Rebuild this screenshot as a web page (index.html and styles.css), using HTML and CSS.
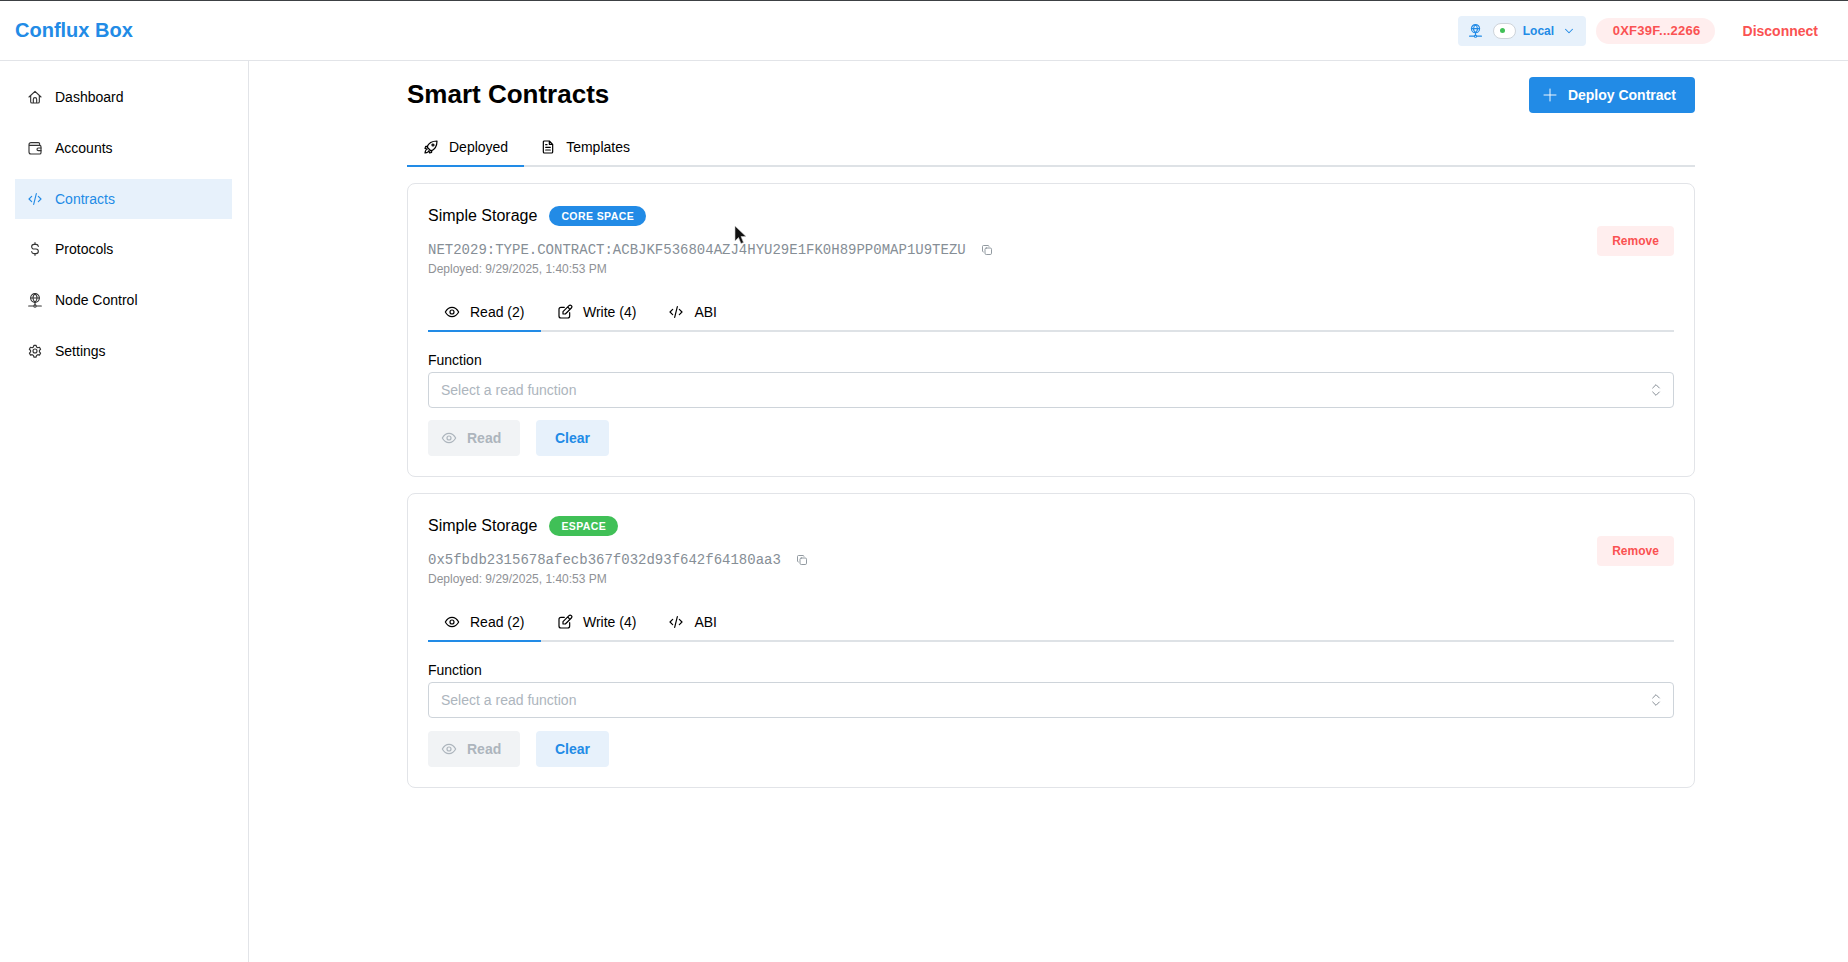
FILE: index.html
```html
<!DOCTYPE html>
<html lang="en">
  <head>
    <meta charset="UTF-8" />
    <title>Conflux Box</title>
    <link rel="stylesheet" href="styles.css">
  </head>
  <body>
    <svg class="icon-defs" width="0" height="0">
      <symbol id="i-home" viewBox="0 0 24 24"><path d="M3 12 12 3.500l9 8.500M5.500 10v9a2 2 0 0 0 2 2h9a2 2 0 0 0 2-2v-9M9.500 21v-5.500a2.500 2.500 0 0 1 5 0V21"/></symbol>
      <symbol id="i-wallet" viewBox="0 0 24 24"><path d="M19 8V6a2 2 0 0 0-2-2H6a3 3 0 0 0-3 3v11a3 3 0 0 0 3 3h13a2 2 0 0 0 2-2V10a2 2 0 0 0-2-2H3"/><path d="M21 12h-4a2 2 0 0 0 0 4h4"/></symbol>
      <symbol id="i-code" viewBox="0 0 24 24"><path d="M7 8l-4 4 4 4M17 8l4 4-4 4M14 4l-4 16"/></symbol>
      <symbol id="i-dollar" viewBox="0 0 24 24"><path d="M17 8a3.500 3.500 0 0 0-3.500-3h-3A3.500 3.500 0 0 0 10.500 12h3a3.500 3.500 0 0 1 0 7h-3A3.500 3.500 0 0 1 7 16M12 2.500V5M12 19v2.500"/></symbol>
      <symbol id="i-node" viewBox="0 0 24 24"><circle cx="12" cy="9" r="6.500"/><path d="M5.500 9h13M12 2.500c-4 4-4 9 0 13M12 2.500c4 4 4 9 0 13M12 15.500V20M2.500 21h7M14.500 21h7"/><circle cx="12" cy="21" r="1.800"/></symbol>
      <symbol id="i-gear" viewBox="0 0 24 24"><circle cx="12" cy="12" r="3"/><path d="M10.300 3.500h3.400l.6 2.500 1.900 1.100 2.500-.7 1.700 3-1.800 1.800v2.200l1.800 1.800-1.700 3-2.500-.7-1.900 1.100-.6 2.500h-3.400l-.6-2.500-1.900-1.100-2.500.7-1.700-3 1.800-1.800v-2.200L3.500 9.400l1.700-3 2.500.7 1.900-1.100z"/></symbol>
      <symbol id="i-chev" viewBox="0 0 24 24"><path d="M6 9l6 6 6-6"/></symbol>
      <symbol id="i-plus" viewBox="0 0 24 24"><path d="M12 3v18M3 12h18"/></symbol>
      <symbol id="i-rocket" viewBox="0 0 24 24"><path d="M9 15l-3-3c2-5 7-9 15-9 0 8-4 13-9 15z"/><circle cx="15" cy="9" r="1.500"/><path d="M7 11H4l-1 3 3 1M13 17v3l-3 1-1-3M6.500 15c-2 .5-3 2-3.500 6 4-.5 5.500-1.500 6-3.500"/></symbol>
      <symbol id="i-file" viewBox="0 0 24 24"><path d="M14 3H6.500a1.500 1.500 0 0 0-1.500 1.500v15A1.500 1.500 0 0 0 6.500 21h11a1.500 1.500 0 0 0 1.500-1.500V8zM14 3v5h5M8.500 12.500h7M8.500 16.500h7M8.500 8.500h2"/></symbol>
      <symbol id="i-copy" viewBox="0 0 24 24"><rect x="8" y="8" width="13" height="13" rx="2.500"/><path d="M4.500 16A2 2 0 0 1 3 14V5a2 2 0 0 1 2-2h9a2 2 0 0 1 2 1.500"/></symbol>
      <symbol id="i-eye" viewBox="0 0 24 24"><path d="M2 12c2.500-4.500 6-7 10-7s7.500 2.500 10 7c-2.500 4.500-6 7-10 7s-7.500-2.500-10-7z"/><circle cx="12" cy="12" r="3"/></symbol>
      <symbol id="i-edit" viewBox="0 0 24 24"><path d="M11 5H6a3 3 0 0 0-3 3v10a3 3 0 0 0 3 3h10a3 3 0 0 0 3-3v-5"/><path d="M9 15v-3.500L18 2.500a2.400 2.400 0 0 1 3.500 3.500L12.500 15zM16 4.500 19.500 8"/></symbol>
      <symbol id="i-updown" viewBox="0 0 24 24"><path d="M7 9l5-5 5 5M7 15l5 5 5-5"/></symbol>
    </svg>

    <header class="topbar">
      <div class="logo">Conflux Box</div>
      <div class="topbar-right">
        <div class="node-pill">
          <svg class="ico ico-node-sm"><use href="#i-node"/></svg>
          <span class="switch"><span class="switch-dot"></span></span>
          <span class="node-label">Local</span>
          <svg class="ico ico-chev"><use href="#i-chev"/></svg>
        </div>
        <div class="addr-pill">0XF39F...2266</div>
        <div class="disconnect">Disconnect</div>
      </div>
    </header>

    <div class="layout">
      <nav class="sidebar">
        <a class="nav-item"><svg class="ico"><use href="#i-home"/></svg>Dashboard</a>
        <a class="nav-item"><svg class="ico"><use href="#i-wallet"/></svg>Accounts</a>
        <a class="nav-item active"><svg class="ico"><use href="#i-code"/></svg>Contracts</a>
        <a class="nav-item"><svg class="ico"><use href="#i-dollar"/></svg>Protocols</a>
        <a class="nav-item"><svg class="ico"><use href="#i-node"/></svg>Node Control</a>
        <a class="nav-item"><svg class="ico"><use href="#i-gear"/></svg>Settings</a>
      </nav>

      <main class="main">
        <div class="page">
          <div class="page-head">
            <h1>Smart Contracts</h1>
            <button class="btn-primary"><svg class="ico"><use href="#i-plus"/></svg>Deploy Contract</button>
          </div>

          <div class="tabs tabs-page">
            <div class="tab active"><svg class="ico"><use href="#i-rocket"/></svg>Deployed</div>
            <div class="tab"><svg class="ico"><use href="#i-file"/></svg>Templates</div>
          </div>

          <section class="card">
            <div class="card-head">
              <div>
                <div class="card-title">
                  <span class="card-name">Simple Storage</span>
                  <span class="badge badge-core">CORE SPACE</span>
                </div>
                <div class="address">NET2029:TYPE.CONTRACT:ACBJKF536804AZJ4HYU29E1FK0H89PP0MAP1U9TEZU<svg class="ico"><use href="#i-copy"/></svg></div>
                <div class="deployed">Deployed: 9/29/2025, 1:40:53 PM</div>
              </div>
              <button class="btn-remove">Remove</button>
            </div>
            <div class="tabs">
              <div class="tab active"><svg class="ico"><use href="#i-eye"/></svg>Read (2)</div>
              <div class="tab"><svg class="ico"><use href="#i-edit"/></svg>Write (4)</div>
              <div class="tab"><svg class="ico"><use href="#i-code"/></svg>ABI</div>
            </div>
            <div class="field-label">Function</div>
            <div class="select">Select a read function<svg class="ico"><use href="#i-updown"/></svg></div>
            <div class="actions">
              <button class="btn-read"><svg class="ico"><use href="#i-eye"/></svg>Read</button>
              <button class="btn-clear">Clear</button>
            </div>
          </section>

          <section class="card">
            <div class="card-head">
              <div>
                <div class="card-title">
                  <span class="card-name">Simple Storage</span>
                  <span class="badge badge-espace">ESPACE</span>
                </div>
                <div class="address">0x5fbdb2315678afecb367f032d93f642f64180aa3<svg class="ico"><use href="#i-copy"/></svg></div>
                <div class="deployed">Deployed: 9/29/2025, 1:40:53 PM</div>
              </div>
              <button class="btn-remove">Remove</button>
            </div>
            <div class="tabs">
              <div class="tab active"><svg class="ico"><use href="#i-eye"/></svg>Read (2)</div>
              <div class="tab"><svg class="ico"><use href="#i-edit"/></svg>Write (4)</div>
              <div class="tab"><svg class="ico"><use href="#i-code"/></svg>ABI</div>
            </div>
            <div class="field-label">Function</div>
            <div class="select">Select a read function<svg class="ico"><use href="#i-updown"/></svg></div>
            <div class="actions">
              <button class="btn-read"><svg class="ico"><use href="#i-eye"/></svg>Read</button>
              <button class="btn-clear">Clear</button>
            </div>
          </section>
        </div>
      </main>
    </div>

    <svg class="cursor" width="13" height="20" viewBox="0 0 13 20"><path d="M1 1v15l3.500-3.500 2.500 6 2.500-1-2.500-6H12z" fill="#111" stroke="#ccc" stroke-width=".6"/></svg>
  </body>
</html>
```

FILE: styles.css
```css
* {
  box-sizing: border-box;
}
body {
  font-family: "Liberation Sans", Arial, sans-serif;
  margin: 0;
  height: 962px;
  overflow: hidden;
  color: #000;
  background-color: #fff;
  border-top: 1px solid #3c4043;
}
.icon-defs {
  position: absolute;
}
.ico {
  width: 16px;
  height: 16px;
  flex-shrink: 0;
  fill: none;
  stroke: currentColor;
  stroke-width: 1.8;
  stroke-linecap: round;
  stroke-linejoin: round;
}
button {
  font-family: inherit;
  border: none;
}

/* top bar */
.topbar {
  height: 60px;
  display: flex;
  align-items: center;
  justify-content: space-between;
  padding: 0 30px 0 15px;
  border-bottom: 1px solid #e2e4e8;
}
.logo {
  font-size: 20px;
  font-weight: bold;
  color: #228be6;
}
.topbar-right {
  display: flex;
  align-items: center;
}
.node-pill {
  display: flex;
  align-items: center;
  height: 30px;
  width: 128px;
  padding: 0 10px;
  background-color: #e7f1fb;
  border-radius: 4px;
  color: #228be6;
  font-size: 12px;
  font-weight: bold;
}
.ico-node-sm {
  width: 15px;
  height: 15px;
}
.switch {
  display: flex;
  align-items: center;
  width: 23px;
  height: 16px;
  margin-left: 10px;
  padding-left: 6px;
  border: 1px solid #ced4da;
  border-radius: 8px;
  background-color: #fff;
}
.switch-dot {
  width: 5px;
  height: 5px;
  border-radius: 50%;
  background-color: #40c057;
}
.node-label {
  margin-left: 7px;
}
.ico-chev {
  width: 14px;
  height: 14px;
  margin-left: auto;
}
.addr-pill {
  display: flex;
  align-items: center;
  height: 26px;
  margin-left: 10px;
  padding: 0 14px 0 17px;
  background-color: #ffeeee;
  border-radius: 13px;
  color: #fa5252;
  font-size: 13px;
  font-weight: bold;
  letter-spacing: 0.25px;
}
.disconnect {
  margin-left: 28px;
  color: #fa5252;
  font-size: 14px;
  font-weight: bold;
}

/* sidebar */
.layout {
  display: flex;
  height: 901px;
}
.sidebar {
  width: 249px;
  flex-shrink: 0;
  padding: 16px 16px 0 15px;
  border-right: 1px solid #e2e4e8;
}
.nav-item {
  display: flex;
  align-items: center;
  height: 40px;
  margin-bottom: 10.8px;
  padding-left: 12px;
  gap: 12px;
  font-size: 14px;
  color: #000;
}
.nav-item .ico {
  color: #333;
  stroke-width: 1.7;
}
.nav-item.active {
  background-color: #e7f1fb;
  color: #228be6;
}
.nav-item.active .ico {
  color: #228be6;
}

/* main area */
.main {
  flex: 1;
  padding: 16px 153px 0 158px;
}
.page-head {
  display: flex;
  align-items: center;
  justify-content: space-between;
  height: 36px;
}
h1 {
  margin: 0 0 2px;
  font-size: 26px;
  font-weight: bold;
}
.btn-primary {
  display: flex;
  align-items: center;
  gap: 10px;
  height: 36px;
  padding: 0 19px 0 13px;
  background-color: #228be6;
  border-radius: 4px;
  color: #fff;
  font-size: 14px;
  font-weight: bold;
}
.btn-primary .ico {
  stroke-width: 1.4;
}
.tabs {
  display: flex;
  border-bottom: 2px solid #dee2e6;
}
.tabs-page {
  margin-top: 14px;
  margin-bottom: 16px;
}
.tab {
  display: flex;
  align-items: center;
  gap: 10px;
  height: 40px;
  margin-bottom: -2px;
  padding: 1px 16px 0;
  border-bottom: 2px solid transparent;
  font-size: 14px;
}
.card .tab.active {
  padding-right: 16.5px;
}
.tab.active {
  border-bottom-color: #228be6;
}

/* contract card */
.card {
  height: 294.3px;
  margin-bottom: 16px;
  padding: 22px 20px 0;
  border: 1px solid #e2e4e8;
  border-radius: 8px;
}
.card-head {
  display: flex;
  align-items: center;
  justify-content: space-between;
  margin-bottom: 16px;
}
.card-title {
  display: flex;
  align-items: center;
  gap: 12px;
  height: 20px;
}
.card-name {
  font-size: 16px;
}
.badge {
  display: flex;
  align-items: center;
  height: 20px;
  padding: 0 12px;
  border-radius: 10px;
  color: #fff;
  font-size: 10.5px;
  font-weight: bold;
  letter-spacing: 0.4px;
}
.badge-core {
  background-color: #228be6;
}
.badge-espace {
  background-color: #40c057;
}
.address {
  display: flex;
  align-items: center;
  height: 18px;
  margin-top: 15px;
  font-family: "Liberation Mono", monospace;
  font-size: 14px;
  color: #868e96;
}
.address .ico {
  width: 12px;
  height: 12px;
  margin-left: 15px;
}
.deployed {
  height: 14px;
  margin-top: 3px;
  font-size: 12px;
  line-height: 14px;
  color: #909296;
}
.btn-remove {
  width: 77px;
  height: 30px;
  background-color: #ffeeee;
  border-radius: 4px;
  color: #fa5252;
  font-size: 12px;
  font-weight: bold;
}
.field-label {
  height: 16px;
  margin-top: 20px;
  font-size: 14px;
  line-height: 16px;
}
.select {
  display: flex;
  align-items: center;
  justify-content: space-between;
  height: 36px;
  margin-top: 4px;
  padding: 0 9px 0 12px;
  border: 1px solid #ced4da;
  border-radius: 4px;
  font-size: 14px;
  color: #adb5bd;
}
.select .ico {
  color: #868e96;
  stroke-width: 1.5;
}
.actions {
  display: flex;
  gap: 16px;
  margin-top: 12.3px;
}
.btn-read {
  display: flex;
  align-items: center;
  gap: 10px;
  width: 92px;
  height: 36px;
  padding-left: 13px;
  background-color: #f1f3f5;
  border-radius: 4px;
  color: #adb5bd;
  font-size: 14px;
  font-weight: bold;
}
.btn-clear {
  width: 73px;
  height: 36px;
  background-color: #e7f1fb;
  border-radius: 4px;
  color: #228be6;
  font-size: 14px;
  font-weight: bold;
}
.cursor {
  position: absolute;
  left: 734px;
  top: 225px;
}
```
